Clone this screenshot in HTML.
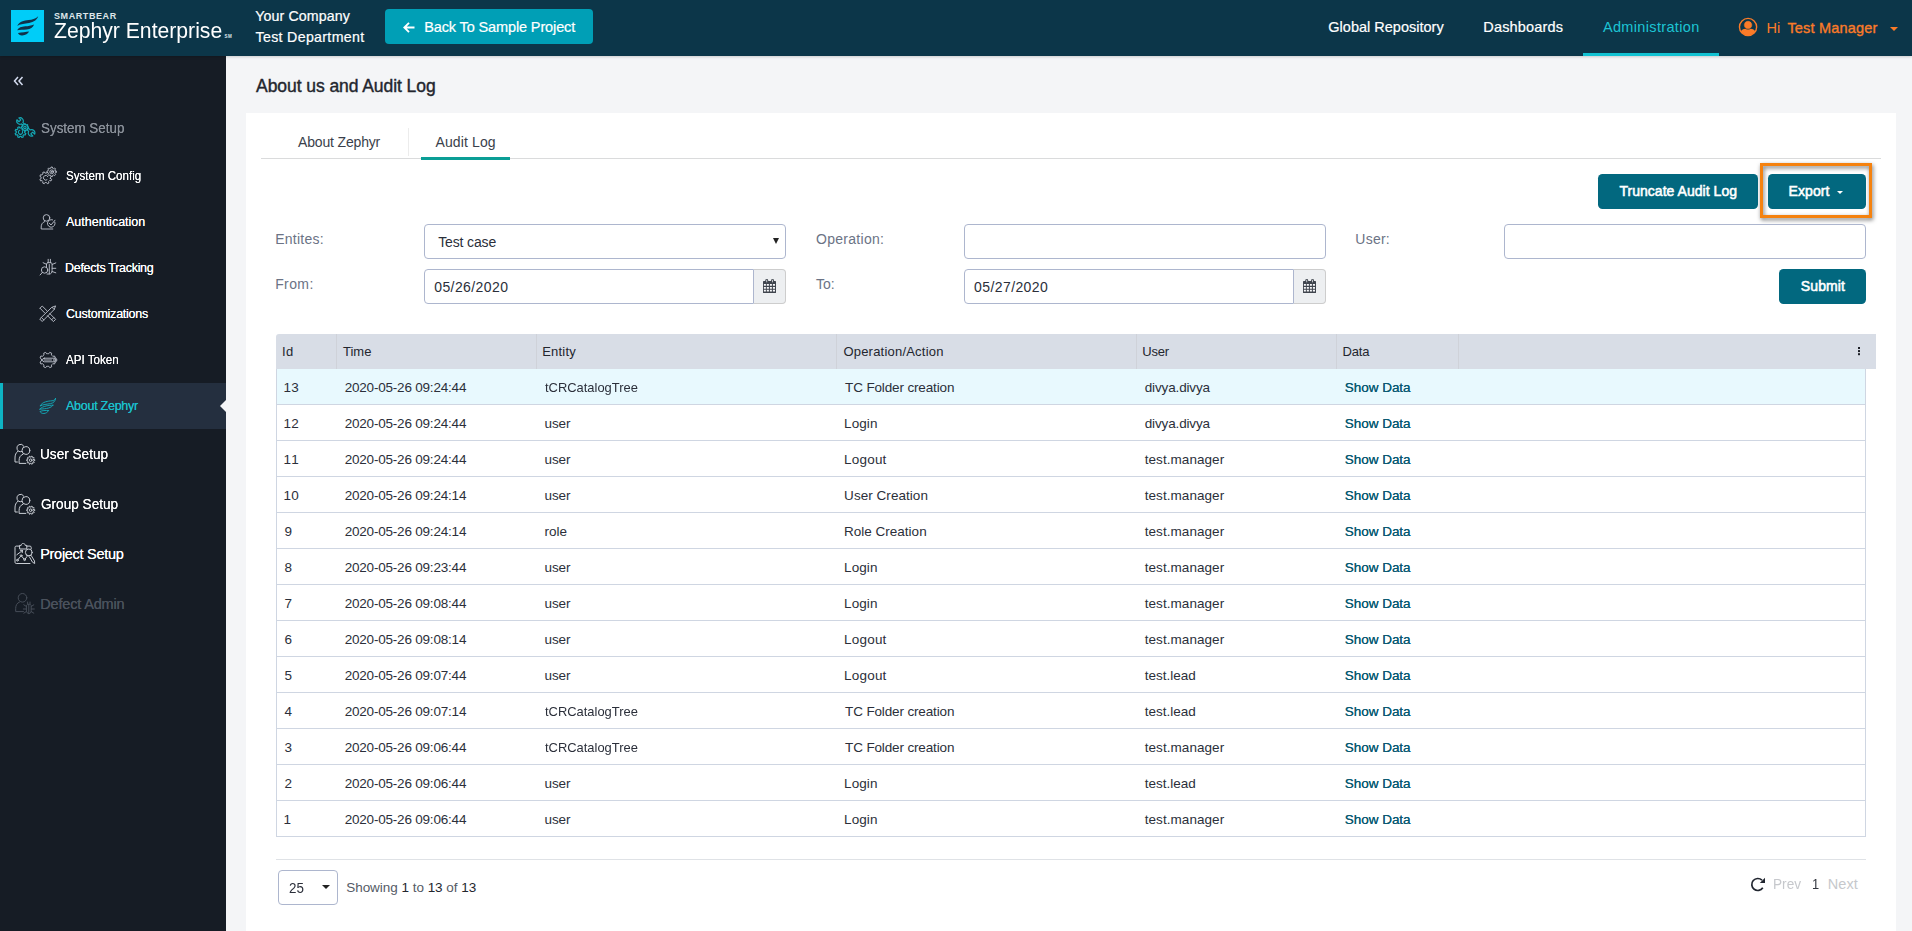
<!DOCTYPE html>
<html>
<head>
<meta charset="utf-8">
<title>Zephyr Enterprise - Audit Log</title>
<style>
*{box-sizing:border-box;margin:0;padding:0}
html,body{width:1912px;height:931px;overflow:hidden;background:#f4f5f7;font-family:"Liberation Sans",sans-serif;color:#2b2f3a}
.abs{position:absolute;white-space:nowrap}
#hdr{position:absolute;left:0;top:0;width:1912px;height:56px;background:#0c3649;box-shadow:0 1px 2.500px rgba(0,0,0,.17);z-index:5}
#side{position:absolute;left:0;top:56px;width:226px;height:875px;background:#161c25}
#panel{position:absolute;left:246px;top:113px;width:1650px;height:818px;background:#fff}
.t{position:absolute;white-space:nowrap;line-height:1}
.w{color:#fff}
.nav{font-size:15px;top:19px;color:#fff}
.sub{font-size:12.5px;font-weight:bold;color:#fff;left:66px;letter-spacing:-.2px}
.main{font-size:15px;font-weight:bold;color:#fff;left:41px;letter-spacing:-.2px}
.lbl{font-size:13.5px;color:#6e7687}
.inp{position:absolute;height:35px;border:1px solid #adb6ce;border-radius:4px;background:#fff}
.btn{position:absolute;height:35px;background:#02687f;border-radius:4.500px;color:#fff;font-weight:bold;font-size:14px;line-height:35px;text-align:center;white-space:nowrap}
.th{position:absolute;top:334px;height:35px;background:#d8dde6;border-right:1px solid #cdd2dc;font-size:12.5px;color:#2b2f3a;line-height:35px;padding-left:6px;white-space:nowrap}
.vl{position:absolute;top:334px;width:1px;height:35px;background:#cfd2d9}
.row{position:absolute;left:276px;width:1590px;height:36px;border-left:1px solid #cfd6e2;border-right:1px solid #cfd6e2;border-bottom:1px solid #cfd6e2;font-size:13.5px;line-height:35px;color:#2b2f3a}
.row span{position:absolute;top:0;white-space:nowrap}
.c1{left:6px}.c2{left:67px}.c3{left:267px}.c4{left:567px}.c5{left:867px}.c6{left:1067px;color:#0a5b73;text-shadow:0 0 0 #0a5b73}
</style>
</head>
<body>
<div id="hdr">
  <div class="abs" style="left:11px;top:10px;width:32.500px;height:32px;background:#00cdf8"></div>
  <svg class="abs" style="left:11px;top:10px" width="33" height="32" viewBox="0 0 33 32"><g fill="#10324a">
    <path d="M27.200 6.200 C24.500 9 21 9.600 17.700 9.900 C13 10.400 8 11.500 6.300 15.900 C9 14.200 12 14 16.400 13.300 C21 12.600 25.500 11 27.200 6.200 Z"/>
    <path d="M23.100 14.400 C20 15.800 17 16 14.300 16.300 C10.500 16.700 7.500 17.500 6.100 20.200 C9 19.800 12 20 15.600 19.600 C19.500 19 22 17.300 23.100 14.400 Z"/>
    <path d="M18.100 21.500 C15 22 11 22.300 7 23 C7.500 24.800 9.500 25.600 11.300 25.400 C14.500 25 17 23.800 18.100 21.500 Z"/></g></svg>
  <div class="t" style="font-size:9px;font-weight:bold;color:#dfe6ea;letter-spacing:0.588px;left:54.00px;top:12.00px;">SMARTBEAR</div>
  <div class="t" style="font-size:22px;color:#fff;transform:scaleX(0.9621);transform-origin:0 0;left:54.00px;top:20.00px;">Zephyr Enterprise</div>
  <div class="t" style="font-size:4.5px;font-weight:bold;color:#dfe6ea;letter-spacing:0.499px;left:224.50px;top:35.00px;">SM</div>
  <div class="t" style="font-size:14.2px;color:#fff;letter-spacing:0.106px;left:255.30px;top:9.00px;-webkit-text-stroke:.2px #fff;">Your Company</div>
  <div class="t" style="font-size:14.2px;color:#fff;letter-spacing:0.326px;left:255.50px;top:30.00px;-webkit-text-stroke:.2px #fff;">Test Department</div>
  <div class="abs" style="left:385px;top:9px;width:208px;height:35px;background:#009fb6;border-radius:4px"></div>
  <svg class="abs" style="left:403px;top:21.500px" width="12" height="11" viewBox="0 0 12 11" fill="none" stroke="#fff" stroke-width="1.900"><path d="M6 .8 L1.300 5.500 L6 10.200 M1.500 5.500 H11.500"/></svg>
  <div class="t" style="font-size:14.5px;color:#fff;letter-spacing:-0.124px;left:424.20px;top:20.00px;-webkit-text-stroke:.2px #fff;">Back To Sample Project</div>
  <div class="t" style="font-size:14.5px;color:#fff;letter-spacing:0.006px;left:1328.30px;top:20.00px;-webkit-text-stroke:.2px #fff;">Global Repository</div>
  <div class="t" style="font-size:14.5px;color:#fff;letter-spacing:0.163px;left:1483.30px;top:20.00px;-webkit-text-stroke:.2px #fff;">Dashboards</div>
  <div class="t" style="font-size:14.5px;color:#1cc4d4;letter-spacing:0.346px;left:1602.90px;top:20.00px;">Administration</div>
  <div class="abs" style="left:1583px;top:52.500px;width:136px;height:3.500px;background:#12c2d2"></div>
  <svg class="abs" style="left:1738.100px;top:17px" width="20" height="20" viewBox="0 0 20 20"><defs><clipPath id="uc"><circle cx="10.050" cy="10" r="8.400"/></clipPath></defs><circle cx="10.050" cy="10" r="8.600" fill="none" stroke="#fb7b28" stroke-width="1.400"/><g clip-path="url(#uc)" fill="#fb7b28"><path d="M2 20 V16 C3.200 13 5 11.700 7.700 11.700 H12.400 C15.100 11.700 16.900 13 18.100 16 V20 Z"/><circle cx="10.050" cy="7.950" r="4.300" stroke="#0c3649" stroke-width=".7"/></g></svg>
  <div class="t" style="font-size:14.5px;color:#fb7b28;letter-spacing:-0.171px;left:1766.60px;top:21.00px;">Hi</div>
  <div class="t" style="font-size:14.5px;color:#fb7b28;letter-spacing:0.180px;left:1787.40px;top:21.00px;-webkit-text-stroke:.35px #fb7b28;">Test Manager</div>
  <div class="abs" style="left:1889.500px;top:26.700px;width:0;height:0;border-left:4px solid transparent;border-right:4px solid transparent;border-top:4px solid #fb7b28"></div>
</div>
<div id="side">
  <!-- collapse chevrons -->
  <svg class="abs" style="left:13px;top:19.600px" width="11" height="10" viewBox="0 0 11 10" fill="none" stroke="#d4dcf0" stroke-width="1.5"><path d="M5 1 L1.5 5 L5 9 M9.5 1 L6 5 L9.5 9"/></svg>
  <!-- System Setup (top-level, teal icon, grey text) -->
  <svg class="abs" style="left:14px;top:61px" width="22" height="22" viewBox="0 0 22 22" fill="none" stroke="#14a8b5" stroke-width="1.15" stroke-linecap="round" stroke-linejoin="round"><path d="M7.48 6.95A3.3 3.3 0 0 1 2.95 2.74L4.93 4.76L6.79 2.95L4.81 0.92A3.3 3.3 0 0 1 8.91 5.55L16.12 12.95A3.3 3.3 0 0 1 20.65 17.16L18.67 15.14L16.81 16.95L18.79 18.98A3.3 3.3 0 0 1 14.69 14.35Z"/><path d="M10.65 15.82L11.83 16.57L11.23 18L9.88 17.7A4.2 4.2 0 0 1 9 18.58L9.3 19.93L7.87 20.53L7.12 19.35A4.2 4.2 0 0 1 5.88 19.35L5.13 20.53L3.7 19.93L4 18.58A4.2 4.2 0 0 1 3.12 17.7L1.77 18L1.17 16.57L2.35 15.82A4.2 4.2 0 0 1 2.35 14.58L1.17 13.83L1.77 12.4L3.12 12.7A4.2 4.2 0 0 1 4 11.82L3.7 10.47L5.13 9.87L5.88 11.05A4.2 4.2 0 0 1 7.12 11.05L7.87 9.87L9.3 10.47L9 11.82A4.2 4.2 0 0 1 9.88 12.7L11.23 12.4L11.83 13.83L10.65 14.58A4.2 4.2 0 0 1 10.65 15.82Z" fill="#161c25"/><path d="M8.47 14.48A2.1 2.1 0 1 1 5.78 13.23"/><path d="M13.52 9.75L14.46 9.89L14.46 10.91L13.52 11.05A2.7 2.7 0 0 1 13.21 11.79L13.78 12.56L13.06 13.28L12.29 12.71A2.7 2.7 0 0 1 11.55 13.02L11.41 13.96L10.39 13.96L10.25 13.02A2.7 2.7 0 0 1 9.51 12.71L8.74 13.28L8.02 12.56L8.59 11.79A2.7 2.7 0 0 1 8.28 11.05L7.34 10.91L7.34 9.89L8.28 9.75A2.7 2.7 0 0 1 8.59 9.01L8.02 8.24L8.74 7.52L9.51 8.09A2.7 2.7 0 0 1 10.25 7.78L10.39 6.84L11.41 6.84L11.55 7.78A2.7 2.7 0 0 1 12.29 8.09L13.06 7.52L13.78 8.24L13.21 9.01A2.7 2.7 0 0 1 13.52 9.75Z" fill="#161c25"/><circle cx="10.9" cy="10.4" r="1.2"/></svg>
  <div class="t" style="font-size:14.5px;color:#8a9099;transform:scaleX(0.9235);transform-origin:0 0;left:41.00px;top:65.00px;text-shadow:0 0 .6px #8a9099;">System Setup</div>

  <!-- System Config -->
  <svg class="abs" style="left:39px;top:110px" width="19" height="19" viewBox="0 0 19 19" fill="none" stroke="#b9bec8" stroke-width="0.95" stroke-linecap="round" stroke-linejoin="round"><path d="M11.45 12.5L12.71 13.32L12.05 14.91L10.58 14.59A4.7 4.7 0 0 1 9.59 15.58L9.91 17.05L8.32 17.71L7.5 16.45A4.7 4.7 0 0 1 6.1 16.45L5.28 17.71L3.69 17.05L4.01 15.58A4.7 4.7 0 0 1 3.02 14.59L1.55 14.91L0.89 13.32L2.15 12.5A4.7 4.7 0 0 1 2.15 11.1L0.89 10.28L1.55 8.69L3.02 9.01A4.7 4.7 0 0 1 4.01 8.02L3.69 6.55L5.28 5.89L6.1 7.15A4.7 4.7 0 0 1 7.5 7.15L8.32 5.89L9.91 6.55L9.59 8.02A4.7 4.7 0 0 1 10.58 9.01L12.05 8.69L12.71 10.28L11.45 11.1A4.7 4.7 0 0 1 11.45 12.5Z"/><path d="M8 13.88A2.4 2.4 0 1 1 8.88 10.6"/><path d="M16.29 4.91L17.45 5.12L17.45 6.48L16.29 6.69A3.7 3.7 0 0 1 15.87 7.71L16.54 8.68L15.58 9.64L14.61 8.97A3.7 3.7 0 0 1 13.59 9.39L13.38 10.55L12.02 10.55L11.81 9.39A3.7 3.7 0 0 1 10.79 8.97L9.82 9.64L8.86 8.68L9.53 7.71A3.7 3.7 0 0 1 9.11 6.69L7.95 6.48L7.95 5.12L9.11 4.91A3.7 3.7 0 0 1 9.53 3.89L8.86 2.92L9.82 1.96L10.79 2.63A3.7 3.7 0 0 1 11.81 2.21L12.02 1.05L13.38 1.05L13.59 2.21A3.7 3.7 0 0 1 14.61 2.63L15.58 1.96L16.54 2.92L15.87 3.89A3.7 3.7 0 0 1 16.29 4.91Z" fill="#161c25"/><circle cx="12.700" cy="5.800" r="1.900"/><circle cx="12.700" cy="5.800" r=".5" fill="#b9bec8"/></svg>
  <div class="t" style="font-size:12.5px;color:#ffffff;transform:scaleX(0.9246);transform-origin:0 0;left:66.00px;top:114.00px;text-shadow:0 0 .6px #ffffff;">System Config</div>

  <!-- Authentication -->
  <svg class="abs" style="left:40px;top:158px" width="17" height="17" viewBox="0 0 17 17" fill="none" stroke="#b9bec8" stroke-width="0.95" stroke-linecap="round" stroke-linejoin="round"><circle cx="6.500" cy="3.900" r="3.300"/><path d="M4.600 7.600 C2.200 8.600 1.200 10.500 1.200 13 V15 H12.800"/><path d="M14.87 8.1A3.8 3.8 0 1 1 12.6 5.83"/><path d="M9.400 9.300 L11 11 L15 6.200"/></svg>
  <div class="t" style="font-size:12.5px;color:#ffffff;letter-spacing:0.002px;left:66.00px;top:160.00px;text-shadow:0 0 .6px #ffffff;">Authentication</div>

  <!-- Defects Tracking -->
  <svg class="abs" style="left:39px;top:202px" width="18" height="18" viewBox="0 0 18 18" fill="none" stroke="#b9bec8" stroke-width="0.95" stroke-linecap="round" stroke-linejoin="round"><path d="M8.600 4.700 H12 M9.200 4.700 V1.300 M11.400 4.700 V1.300 M8.600 4.700 C7.800 5 7.500 5.800 7.500 6.500 M12 4.700 C12.800 5 13.100 5.800 13.100 6.500 V12.500 C13.100 14.800 12 16 10.300 16 H8"/><path d="M10.300 6.500 V16 M7.500 6.500 V8.600 M13.100 6.500 L16.800 4.900 M13.100 10.300 H16.800 M13.100 13.500 L16.800 14.800 M7.500 6.300 L4.100 4.700"/><circle cx="5.600" cy="12" r="3.200"/><path d="M3.400 14.400 L1.100 17"/></svg>
  <div class="t" style="font-size:12.5px;color:#ffffff;letter-spacing:-0.291px;left:65.00px;top:206.00px;text-shadow:0 0 .6px #ffffff;">Defects Tracking</div>

  <!-- Customizations -->
  <svg class="abs" style="left:39px;top:249px" width="18" height="18" viewBox="0 0 18 18" fill="none" stroke="#b9bec8" stroke-width="0.95" stroke-linecap="round" stroke-linejoin="round"><path d="M1 14.300 L3.200 16.500 L15.200 4.500 L16.600 .9 L13 2.300 Z M13 2.300 L15.200 4.500 M2.600 12.700 L4.800 14.900"/><path d="M1 3.200 L3.200 1 L8 5.800 M10.700 8.500 L16.600 14.400 L14.400 16.600 L8.500 10.700 M5.800 8 L1 3.200 M12.600 14.800 L14.800 12.600"/></svg>
  <div class="t" style="font-size:12.5px;color:#ffffff;letter-spacing:-0.246px;left:66.00px;top:252.00px;text-shadow:0 0 .6px #ffffff;">Customizations</div>

  <!-- API Token -->
  <svg class="abs" style="left:39px;top:295px" width="19" height="18" viewBox="0 0 19 18" fill="none" stroke="#b9bec8" stroke-width="0.95" stroke-linecap="round" stroke-linejoin="round"><path d="M14.92 9.99L16.34 11.02L15.53 12.97L13.8 12.7A6.3 6.3 0 0 1 12.4 14.1L12.67 15.83L10.72 16.64L9.69 15.22A6.3 6.3 0 0 1 7.71 15.22L6.68 16.64L4.73 15.83L5 14.1A6.3 6.3 0 0 1 3.6 12.7L1.87 12.97L1.06 11.02L2.48 9.99A6.3 6.3 0 0 1 2.48 8.01L1.06 6.98L1.87 5.03L3.6 5.3A6.3 6.3 0 0 1 5 3.9L4.73 2.17L6.68 1.36L7.71 2.78A6.3 6.3 0 0 1 9.69 2.78L10.72 1.36L12.67 2.17L12.4 3.9A6.3 6.3 0 0 1 13.8 5.3L15.53 5.03L16.34 6.98L14.92 8.01A6.3 6.3 0 0 1 14.92 9.99Z"/><rect x="3.500" y="7.200" width="14.400" height="3.600" rx="1.800" fill="#161c25"/><circle cx="15.600" cy="9" r="1"/><path d="M5.300 9 H12.500"/></svg>
  <div class="t" style="font-size:12.5px;color:#ffffff;transform:scaleX(0.9294);transform-origin:0 0;left:66.00px;top:298.00px;text-shadow:0 0 .6px #ffffff;">API Token</div>

  <!-- About Zephyr (active) -->
  <div class="abs" style="left:0;top:327px;width:226px;height:46px;background:#242f3f;border-left:3px solid #0eb4c4"></div>
  <svg class="abs" style="left:39px;top:342px" width="18" height="17" viewBox="0 0 18 17" fill="none" stroke="#14a8b5" stroke-width="0.95" stroke-linecap="round" stroke-linejoin="round"><path d="M16.600 .3 C15.800 2 14.800 2.600 13 2.800 C9 3.100 3.500 3.600 1 8.100 C4 6.300 8 6.300 11.500 5.600 C14.500 5 16.300 3.400 16.600 .3 Z"/><path d="M13.900 7.200 C10 7.300 4 7.800 .5 11.300 C4 10.800 7 10.800 9.500 10 C11.800 9.300 13.200 8.500 13.900 7.200 Z"/><path d="M9.400 12.600 C6.500 12.300 3 12.500 1 13.500 C1.800 15 3.300 15.600 4.900 15.500 C7 15.300 8.700 14.300 9.400 12.600 Z"/></svg>
  <div class="t" style="font-size:12.5px;color:#1bbfcb;letter-spacing:-0.262px;left:66.00px;top:344.00px;text-shadow:0 0 .6px #1bbfcb;">About Zephyr</div>
  <div class="abs" style="left:220px;top:343.500px;width:0;height:0;border-top:6px solid transparent;border-bottom:6px solid transparent;border-right:6px solid #f4f5f7"></div>

  <!-- User Setup -->
  <svg class="abs" style="left:14px;top:387px" width="22" height="22" viewBox="0 0 22 22" fill="none" stroke="#c9cdd4" stroke-width="1" stroke-linecap="round" stroke-linejoin="round"><path d="M7.56 8.57A3.7 3.7 0 1 1 9.8 3.15"/><path d="M3.900 8.200 C1.800 9.800 1 12 1 15 V19 H3.400"/><circle cx="11.900" cy="7.500" r="3.900"/><path d="M8.900 11.200 C6.200 12.400 5.100 14.500 5.100 17.500 V20.400 H11.800"/><path d="M19.75 16.62L20.78 16.76L20.78 17.64L19.75 17.78A3.1 3.1 0 0 1 19.5 18.52L20.25 19.24L19.74 19.95L18.82 19.46A3.1 3.1 0 0 1 18.19 19.92L18.38 20.94L17.54 21.21L17.09 20.28A3.1 3.1 0 0 1 16.31 20.28L15.86 21.21L15.02 20.94L15.21 19.92A3.1 3.1 0 0 1 14.58 19.46L13.66 19.95L13.15 19.24L13.9 18.52A3.1 3.1 0 0 1 13.65 17.78L12.62 17.64L12.62 16.76L13.65 16.62A3.1 3.1 0 0 1 13.9 15.88L13.15 15.16L13.66 14.45L14.58 14.94A3.1 3.1 0 0 1 15.21 14.48L15.02 13.46L15.86 13.19L16.31 14.12A3.1 3.1 0 0 1 17.09 14.12L17.54 13.19L18.38 13.46L18.19 14.48A3.1 3.1 0 0 1 18.82 14.94L19.74 14.45L20.25 15.16L19.5 15.88A3.1 3.1 0 0 1 19.75 16.62Z"/><circle cx="16.700" cy="17.200" r="1.300"/></svg>
  <div class="t" style="font-size:14.5px;color:#ffffff;transform:scaleX(0.9388);transform-origin:0 0;left:40.26px;top:391.00px;text-shadow:0 0 .6px #ffffff;">User Setup</div>

  <!-- Group Setup -->
  <svg class="abs" style="left:14px;top:437px" width="22" height="22" viewBox="0 0 22 22" fill="none" stroke="#c9cdd4" stroke-width="1" stroke-linecap="round" stroke-linejoin="round"><path d="M7.56 8.57A3.7 3.7 0 1 1 9.8 3.15"/><path d="M3.900 8.200 C1.800 9.800 1 12 1 15 V19 H3.400"/><circle cx="11.900" cy="7.500" r="3.900"/><path d="M8.900 11.200 C6.200 12.400 5.100 14.500 5.100 17.500 V20.400 H11.800"/><path d="M19.75 16.62L20.78 16.76L20.78 17.64L19.75 17.78A3.1 3.1 0 0 1 19.5 18.52L20.25 19.24L19.74 19.95L18.82 19.46A3.1 3.1 0 0 1 18.19 19.92L18.38 20.94L17.54 21.21L17.09 20.28A3.1 3.1 0 0 1 16.31 20.28L15.86 21.21L15.02 20.94L15.21 19.92A3.1 3.1 0 0 1 14.58 19.46L13.66 19.95L13.15 19.24L13.9 18.52A3.1 3.1 0 0 1 13.65 17.78L12.62 17.64L12.62 16.76L13.65 16.62A3.1 3.1 0 0 1 13.9 15.88L13.15 15.16L13.66 14.45L14.58 14.94A3.1 3.1 0 0 1 15.21 14.48L15.02 13.46L15.86 13.19L16.31 14.12A3.1 3.1 0 0 1 17.09 14.12L17.54 13.19L18.38 13.46L18.19 14.48A3.1 3.1 0 0 1 18.82 14.94L19.74 14.45L20.25 15.16L19.5 15.88A3.1 3.1 0 0 1 19.75 16.62Z"/><circle cx="16.700" cy="17.200" r="1.300"/></svg>
  <div class="t" style="font-size:14.5px;color:#ffffff;transform:scaleX(0.9385);transform-origin:0 0;left:41.20px;top:441.00px;text-shadow:0 0 .6px #ffffff;">Group Setup</div>

  <!-- Project Setup -->
  <svg class="abs" style="left:14px;top:487px" width="22" height="22" viewBox="0 0 22 22" fill="none" stroke="#c9cdd4" stroke-width="1" stroke-linecap="round" stroke-linejoin="round"><path d="M5.600 3.100 H2.200 C1.500 3.100 1 3.600 1 4.300 V19.300 C1 20 1.500 20.500 2.200 20.500 H16 M12.800 3.100 H16 C16.700 3.100 17.200 3.600 17.200 4.300 V5.800"/><path d="M5.600 5.600 V2.400 H7.200 C7.500 .9 8.200 .3 9.200 .3 S10.900 .9 11.200 2.400 H12.800 V5.600 Z"/><path d="M2.800 11.800 L8.500 7.500 M6.300 7.300 L8.600 7.400 L8.200 9.700 M4 16.500 L6.500 13.500 M7.800 13.400 L10 16 M11.200 16 L13 13.500"/><circle cx="3.400" cy="17.200" r=".9"/><circle cx="7.100" cy="12.700" r=".9"/><circle cx="10.600" cy="16.700" r=".9"/><circle cx="14.800" cy="9.400" r="3.400" fill="#161c25"/><path d="M12.300 12 C13.500 13 15.500 13.300 17 12.200 L20.500 18 L20.700 20.500 L18.500 19.200 L15.500 14"/></svg>
  <div class="t" style="font-size:14.5px;color:#ffffff;letter-spacing:-0.290px;left:40.20px;top:491.00px;text-shadow:0 0 .6px #ffffff;">Project Setup</div>

  <!-- Defect Admin (disabled) -->
  <svg class="abs" style="left:14px;top:537px" width="22" height="23" viewBox="0 0 22 23" fill="none" stroke="#464d58" stroke-width="1" stroke-linecap="round" stroke-linejoin="round"><circle cx="8.500" cy="4.800" r="4.300"/><path d="M5.500 9 C2.800 10 1.700 12.500 1.700 15.500 V18.600 H9.500"/><path d="M12.400 12.600 C12.400 10.800 17.200 10.800 17.200 12.600 V17.500 C17.200 21.800 12.400 21.800 12.400 17.500 Z M14.800 11.200 V20.700 M13.600 11 V9 M16 11 V9"/><path d="M12.400 13.500 L9.800 11.800 M12.400 16 H9.300 M12.400 18.500 L9.800 20.200 M17.200 13.500 L19.800 11.800 M17.200 16 H20.300 M17.200 18.500 L19.800 20.200"/></svg>
  <div class="t" style="font-size:14.5px;color:#4b525d;letter-spacing:-0.161px;left:40.20px;top:541.00px;text-shadow:0 0 .6px #4b525d;">Defect Admin</div>
</div>
<div class="t" style="font-size:17.5px;color:#23262e;letter-spacing:-0.067px;left:256.10px;top:78.00px;-webkit-text-stroke:.4px #23262e;">About us and Audit Log</div>
<div id="panel"></div>
<!-- tabs -->
<div class="abs" style="left:261px;top:158px;width:1620px;height:1px;background:#dadbdc"></div>
<div class="abs" style="left:408px;top:128px;width:1px;height:28px;background:#ececec"></div>
<div class="t" style="font-size:14px;color:#3a3f4b;letter-spacing:-0.162px;left:298.00px;top:135.00px;">About Zephyr</div>
<div class="t" style="font-size:14px;color:#3a3f4b;letter-spacing:0.116px;left:435.50px;top:135.00px;">Audit Log</div>
<div class="abs" style="left:421px;top:157px;width:89px;height:3px;background:#0a9e96"></div>
<!-- action buttons -->
<div class="btn" style="left:1598px;top:174px;width:160px"></div>
<div class="t" style="font-size:14px;color:#fff;letter-spacing:0.036px;left:1619.40px;top:184.00px;-webkit-text-stroke:.55px #fff;">Truncate Audit Log</div>
<div class="abs" style="left:1760px;top:163px;width:112px;height:55px;border:3px solid #f5820f;filter:drop-shadow(1.500px 2px 2px rgba(0,0,0,.55))"></div>
<div class="btn" style="left:1768px;top:174px;width:98px"></div>
<div class="t" style="font-size:14px;color:#fff;letter-spacing:0.106px;left:1788.50px;top:184.00px;-webkit-text-stroke:.55px #fff;">Export</div>
<div class="abs" style="left:1837.200px;top:190.600px;width:0;height:0;border-left:3.700px solid transparent;border-right:3.700px solid transparent;border-top:3.700px solid #fff"></div>
<!-- form row 1 -->
<div class="t" style="font-size:14px;color:#6b7385;letter-spacing:0.243px;left:275.20px;top:232.00px;">Entites:</div>
<div class="inp" style="left:424px;top:224px;width:362px"></div>
<div class="t" style="font-size:14px;color:#2b2f3a;letter-spacing:-0.131px;left:438.20px;top:235.00px;">Test case</div>
<div class="abs" style="left:772.500px;top:237.500px;width:0;height:0;border-left:3.200px solid transparent;border-right:3.200px solid transparent;border-top:6px solid #222"></div>
<div class="t" style="font-size:14px;color:#6b7385;letter-spacing:0.269px;left:816.10px;top:232.00px;">Operation:</div>
<div class="inp" style="left:964px;top:224px;width:362px"></div>
<div class="t" style="font-size:14px;color:#6b7385;letter-spacing:0.235px;left:1355.30px;top:232.00px;">User:</div>
<div class="inp" style="left:1504px;top:224px;width:362px"></div>
<!-- form row 2 -->
<div class="t" style="font-size:14px;color:#6b7385;letter-spacing:0.384px;left:275.20px;top:277.00px;">From:</div>
<div class="inp" style="left:424px;top:269px;width:330px;border-radius:4px 0 0 4px"></div>
<div class="abs" style="left:754px;top:269px;width:32px;height:35px;background:#edeff1;border:1px solid #cdcdcd;border-left:0;border-radius:0 4px 4px 0"></div>
<svg class="abs" style="left:763.100px;top:279.200px" width="13" height="14" viewBox="0 0 13 14"><rect x="0" y="2" width="13" height="12" rx=".6" fill="#40454e"/><path fill="#f7f8f9" d="M.9 5h2v1.800h-2zM3.800 5h2.100v1.800h-2.100zM6.900 5h2v1.800h-2zM9.900 5h2.100v1.800h-2.100zM.9 7.900h2v1.800h-2zM3.800 7.900h2.100v1.800h-2.100zM6.900 7.900h2v1.800h-2zM9.900 7.900h2.100v1.800h-2.100zM.9 10.800h2v1.800h-2zM3.800 10.800h2.100v1.800h-2.100zM6.900 10.800h2v1.800h-2zM9.900 10.800h2.100v1.800h-2.100z"/><rect x="2.300" y="0" width="2.900" height="4" rx="1.400" fill="#40454e"/><rect x="8.100" y="0" width="2.900" height="4" rx="1.400" fill="#40454e"/><rect x="3.350" y=".8" width=".8" height="2.500" fill="#e4e7ea"/><rect x="9.150" y=".8" width=".8" height="2.500" fill="#e4e7ea"/></svg>
<div class="t" style="font-size:14px;color:#2b2f3a;letter-spacing:0.413px;left:434.20px;top:280.00px;">05/26/2020</div>
<div class="t" style="font-size:14px;color:#6b7385;letter-spacing:-0.043px;left:816.10px;top:277.00px;">To:</div>
<div class="inp" style="left:964px;top:269px;width:330px;border-radius:4px 0 0 4px"></div>
<div class="abs" style="left:1294px;top:269px;width:32px;height:35px;background:#edeff1;border:1px solid #cdcdcd;border-left:0;border-radius:0 4px 4px 0"></div>
<svg class="abs" style="left:1303.100px;top:279.200px" width="13" height="14" viewBox="0 0 13 14"><rect x="0" y="2" width="13" height="12" rx=".6" fill="#40454e"/><path fill="#f7f8f9" d="M.9 5h2v1.800h-2zM3.800 5h2.100v1.800h-2.100zM6.900 5h2v1.800h-2zM9.900 5h2.100v1.800h-2.100zM.9 7.900h2v1.800h-2zM3.800 7.900h2.100v1.800h-2.100zM6.900 7.900h2v1.800h-2zM9.900 7.900h2.100v1.800h-2.100zM.9 10.800h2v1.800h-2zM3.800 10.800h2.100v1.800h-2.100zM6.900 10.800h2v1.800h-2zM9.900 10.800h2.100v1.800h-2.100z"/><rect x="2.300" y="0" width="2.900" height="4" rx="1.400" fill="#40454e"/><rect x="8.100" y="0" width="2.900" height="4" rx="1.400" fill="#40454e"/><rect x="3.350" y=".8" width=".8" height="2.500" fill="#e4e7ea"/><rect x="9.150" y=".8" width=".8" height="2.500" fill="#e4e7ea"/></svg>
<div class="t" style="font-size:14px;color:#2b2f3a;letter-spacing:0.402px;left:974.10px;top:280.00px;">05/27/2020</div>
<div class="btn" style="left:1779px;top:269px;width:87px"></div>
<div class="t" style="font-size:14px;color:#fff;letter-spacing:0.103px;left:1800.80px;top:279.00px;-webkit-text-stroke:.55px #fff;">Submit</div>
<!-- table header -->
<div class="abs" style="left:276px;top:334px;width:1600px;height:35px;background:#d8dde6;border-radius:3px 0 0 0"></div>
<div class="vl" style="left:336px"></div><div class="vl" style="left:536px"></div><div class="vl" style="left:836px"></div><div class="vl" style="left:1136px"></div><div class="vl" style="left:1336px"></div><div class="vl" style="left:1458px"></div>
<div class="t" style="font-size:13px;color:#23262e;letter-spacing:0.188px;left:282.10px;top:345.00px;">Id</div>
<div class="t" style="font-size:13px;color:#23262e;letter-spacing:0.041px;left:342.90px;top:345.00px;">Time</div>
<div class="t" style="font-size:13px;color:#23262e;letter-spacing:0.217px;left:542.20px;top:345.00px;">Entity</div>
<div class="t" style="font-size:13px;color:#23262e;letter-spacing:0.213px;left:843.40px;top:345.00px;">Operation/Action</div>
<div class="t" style="font-size:13px;color:#23262e;letter-spacing:-0.206px;left:1142.30px;top:345.00px;">User</div>
<div class="t" style="font-size:13px;color:#23262e;letter-spacing:-0.143px;left:1342.50px;top:345.00px;">Data</div>
<div class="abs" style="left:1857.700px;top:347.200px;width:2.500px;height:2.200px;background:#1d2027;box-shadow:0 3.100px 0 #1d2027,0 6.200px 0 #1d2027"></div>
<!-- rows -->
<div class="row" style="top:369px;background:#e8f9fe;"></div>
<div class="t" style="font-size:13.5px;color:#2b2f3a;letter-spacing:0.092px;left:283.60px;top:381.00px;">13</div>
<div class="t" style="font-size:13.5px;color:#2b2f3a;letter-spacing:-0.203px;left:344.70px;top:381.00px;">2020-05-26 09:24:44</div>
<div class="t" style="font-size:13.5px;color:#2b2f3a;transform:scaleX(0.9572);transform-origin:0 0;left:544.50px;top:381.00px;">tCRCatalogTree</div>
<div class="t" style="font-size:13.5px;color:#2b2f3a;letter-spacing:-0.146px;left:845.10px;top:381.00px;">TC Folder creation</div>
<div class="t" style="font-size:13.5px;color:#2b2f3a;letter-spacing:-0.137px;left:1144.70px;top:381.00px;">divya.divya</div>
<div class="t" style="font-size:13.5px;color:#0b5a72;letter-spacing:-0.029px;left:1344.80px;top:381.00px;text-shadow:0 0 .5px #0b5a72;">Show Data</div>
<div class="row" style="top:405px;"></div>
<div class="t" style="font-size:13.5px;color:#2b2f3a;letter-spacing:0.092px;left:283.60px;top:417.00px;">12</div>
<div class="t" style="font-size:13.5px;color:#2b2f3a;letter-spacing:-0.203px;left:344.70px;top:417.00px;">2020-05-26 09:24:44</div>
<div class="t" style="font-size:13.5px;color:#2b2f3a;letter-spacing:-0.089px;left:544.50px;top:417.00px;">user</div>
<div class="t" style="font-size:13.5px;color:#2b2f3a;letter-spacing:0.069px;left:844.10px;top:417.00px;">Login</div>
<div class="t" style="font-size:13.5px;color:#2b2f3a;letter-spacing:-0.137px;left:1144.70px;top:417.00px;">divya.divya</div>
<div class="t" style="font-size:13.5px;color:#0b5a72;letter-spacing:-0.029px;left:1344.80px;top:417.00px;text-shadow:0 0 .5px #0b5a72;">Show Data</div>
<div class="row" style="top:441px;"></div>
<div class="t" style="font-size:13.5px;color:#2b2f3a;letter-spacing:1.094px;left:283.60px;top:453.00px;">11</div>
<div class="t" style="font-size:13.5px;color:#2b2f3a;letter-spacing:-0.203px;left:344.70px;top:453.00px;">2020-05-26 09:24:44</div>
<div class="t" style="font-size:13.5px;color:#2b2f3a;letter-spacing:-0.089px;left:544.50px;top:453.00px;">user</div>
<div class="t" style="font-size:13.5px;color:#2b2f3a;letter-spacing:0.192px;left:844.10px;top:453.00px;">Logout</div>
<div class="t" style="font-size:13.5px;color:#2b2f3a;letter-spacing:0.064px;left:1144.70px;top:453.00px;">test.manager</div>
<div class="t" style="font-size:13.5px;color:#0b5a72;letter-spacing:-0.029px;left:1344.80px;top:453.00px;text-shadow:0 0 .5px #0b5a72;">Show Data</div>
<div class="row" style="top:477px;"></div>
<div class="t" style="font-size:13.5px;color:#2b2f3a;letter-spacing:0.092px;left:283.60px;top:489.00px;">10</div>
<div class="t" style="font-size:13.5px;color:#2b2f3a;letter-spacing:-0.203px;left:344.70px;top:489.00px;">2020-05-26 09:24:14</div>
<div class="t" style="font-size:13.5px;color:#2b2f3a;letter-spacing:-0.089px;left:544.50px;top:489.00px;">user</div>
<div class="t" style="font-size:13.5px;color:#2b2f3a;letter-spacing:0.044px;left:844.10px;top:489.00px;">User Creation</div>
<div class="t" style="font-size:13.5px;color:#2b2f3a;letter-spacing:0.064px;left:1144.70px;top:489.00px;">test.manager</div>
<div class="t" style="font-size:13.5px;color:#0b5a72;letter-spacing:-0.029px;left:1344.80px;top:489.00px;text-shadow:0 0 .5px #0b5a72;">Show Data</div>
<div class="row" style="top:513px;"></div>
<div class="t" style="font-size:13.5px;color:#2b2f3a;letter-spacing:-0.050px;left:284.60px;top:525.00px;">9</div>
<div class="t" style="font-size:13.5px;color:#2b2f3a;letter-spacing:-0.203px;left:344.70px;top:525.00px;">2020-05-26 09:24:14</div>
<div class="t" style="font-size:13.5px;color:#2b2f3a;left:544.50px;top:525.00px;">role</div>
<div class="t" style="font-size:13.5px;color:#2b2f3a;left:844.10px;top:525.00px;">Role Creation</div>
<div class="t" style="font-size:13.5px;color:#2b2f3a;letter-spacing:0.064px;left:1144.70px;top:525.00px;">test.manager</div>
<div class="t" style="font-size:13.5px;color:#0b5a72;letter-spacing:-0.029px;left:1344.80px;top:525.00px;text-shadow:0 0 .5px #0b5a72;">Show Data</div>
<div class="row" style="top:549px;"></div>
<div class="t" style="font-size:13.5px;color:#2b2f3a;letter-spacing:-0.050px;left:284.60px;top:561.00px;">8</div>
<div class="t" style="font-size:13.5px;color:#2b2f3a;letter-spacing:-0.203px;left:344.70px;top:561.00px;">2020-05-26 09:23:44</div>
<div class="t" style="font-size:13.5px;color:#2b2f3a;letter-spacing:-0.089px;left:544.50px;top:561.00px;">user</div>
<div class="t" style="font-size:13.5px;color:#2b2f3a;letter-spacing:0.069px;left:844.10px;top:561.00px;">Login</div>
<div class="t" style="font-size:13.5px;color:#2b2f3a;letter-spacing:0.064px;left:1144.70px;top:561.00px;">test.manager</div>
<div class="t" style="font-size:13.5px;color:#0b5a72;letter-spacing:-0.029px;left:1344.80px;top:561.00px;text-shadow:0 0 .5px #0b5a72;">Show Data</div>
<div class="row" style="top:585px;"></div>
<div class="t" style="font-size:13.5px;color:#2b2f3a;letter-spacing:-0.050px;left:284.60px;top:597.00px;">7</div>
<div class="t" style="font-size:13.5px;color:#2b2f3a;letter-spacing:-0.203px;left:344.70px;top:597.00px;">2020-05-26 09:08:44</div>
<div class="t" style="font-size:13.5px;color:#2b2f3a;letter-spacing:-0.089px;left:544.50px;top:597.00px;">user</div>
<div class="t" style="font-size:13.5px;color:#2b2f3a;letter-spacing:0.069px;left:844.10px;top:597.00px;">Login</div>
<div class="t" style="font-size:13.5px;color:#2b2f3a;letter-spacing:0.064px;left:1144.70px;top:597.00px;">test.manager</div>
<div class="t" style="font-size:13.5px;color:#0b5a72;letter-spacing:-0.029px;left:1344.80px;top:597.00px;text-shadow:0 0 .5px #0b5a72;">Show Data</div>
<div class="row" style="top:621px;"></div>
<div class="t" style="font-size:13.5px;color:#2b2f3a;letter-spacing:-0.050px;left:284.60px;top:633.00px;">6</div>
<div class="t" style="font-size:13.5px;color:#2b2f3a;letter-spacing:-0.203px;left:344.70px;top:633.00px;">2020-05-26 09:08:14</div>
<div class="t" style="font-size:13.5px;color:#2b2f3a;letter-spacing:-0.089px;left:544.50px;top:633.00px;">user</div>
<div class="t" style="font-size:13.5px;color:#2b2f3a;letter-spacing:0.192px;left:844.10px;top:633.00px;">Logout</div>
<div class="t" style="font-size:13.5px;color:#2b2f3a;letter-spacing:0.064px;left:1144.70px;top:633.00px;">test.manager</div>
<div class="t" style="font-size:13.5px;color:#0b5a72;letter-spacing:-0.029px;left:1344.80px;top:633.00px;text-shadow:0 0 .5px #0b5a72;">Show Data</div>
<div class="row" style="top:657px;"></div>
<div class="t" style="font-size:13.5px;color:#2b2f3a;letter-spacing:-0.050px;left:284.60px;top:669.00px;">5</div>
<div class="t" style="font-size:13.5px;color:#2b2f3a;letter-spacing:-0.203px;left:344.70px;top:669.00px;">2020-05-26 09:07:44</div>
<div class="t" style="font-size:13.5px;color:#2b2f3a;letter-spacing:-0.089px;left:544.50px;top:669.00px;">user</div>
<div class="t" style="font-size:13.5px;color:#2b2f3a;letter-spacing:0.192px;left:844.10px;top:669.00px;">Logout</div>
<div class="t" style="font-size:13.5px;color:#2b2f3a;left:1144.70px;top:669.00px;">test.lead</div>
<div class="t" style="font-size:13.5px;color:#0b5a72;letter-spacing:-0.029px;left:1344.80px;top:669.00px;text-shadow:0 0 .5px #0b5a72;">Show Data</div>
<div class="row" style="top:693px;"></div>
<div class="t" style="font-size:13.5px;color:#2b2f3a;letter-spacing:-0.050px;left:284.60px;top:705.00px;">4</div>
<div class="t" style="font-size:13.5px;color:#2b2f3a;letter-spacing:-0.203px;left:344.70px;top:705.00px;">2020-05-26 09:07:14</div>
<div class="t" style="font-size:13.5px;color:#2b2f3a;transform:scaleX(0.9572);transform-origin:0 0;left:544.50px;top:705.00px;">tCRCatalogTree</div>
<div class="t" style="font-size:13.5px;color:#2b2f3a;letter-spacing:-0.146px;left:845.10px;top:705.00px;">TC Folder creation</div>
<div class="t" style="font-size:13.5px;color:#2b2f3a;left:1144.70px;top:705.00px;">test.lead</div>
<div class="t" style="font-size:13.5px;color:#0b5a72;letter-spacing:-0.029px;left:1344.80px;top:705.00px;text-shadow:0 0 .5px #0b5a72;">Show Data</div>
<div class="row" style="top:729px;"></div>
<div class="t" style="font-size:13.5px;color:#2b2f3a;letter-spacing:-0.050px;left:284.60px;top:741.00px;">3</div>
<div class="t" style="font-size:13.5px;color:#2b2f3a;letter-spacing:-0.203px;left:344.70px;top:741.00px;">2020-05-26 09:06:44</div>
<div class="t" style="font-size:13.5px;color:#2b2f3a;transform:scaleX(0.9572);transform-origin:0 0;left:544.50px;top:741.00px;">tCRCatalogTree</div>
<div class="t" style="font-size:13.5px;color:#2b2f3a;letter-spacing:-0.146px;left:845.10px;top:741.00px;">TC Folder creation</div>
<div class="t" style="font-size:13.5px;color:#2b2f3a;letter-spacing:0.064px;left:1144.70px;top:741.00px;">test.manager</div>
<div class="t" style="font-size:13.5px;color:#0b5a72;letter-spacing:-0.029px;left:1344.80px;top:741.00px;text-shadow:0 0 .5px #0b5a72;">Show Data</div>
<div class="row" style="top:765px;"></div>
<div class="t" style="font-size:13.5px;color:#2b2f3a;letter-spacing:-0.050px;left:284.60px;top:777.00px;">2</div>
<div class="t" style="font-size:13.5px;color:#2b2f3a;letter-spacing:-0.203px;left:344.70px;top:777.00px;">2020-05-26 09:06:44</div>
<div class="t" style="font-size:13.5px;color:#2b2f3a;letter-spacing:-0.089px;left:544.50px;top:777.00px;">user</div>
<div class="t" style="font-size:13.5px;color:#2b2f3a;letter-spacing:0.069px;left:844.10px;top:777.00px;">Login</div>
<div class="t" style="font-size:13.5px;color:#2b2f3a;left:1144.70px;top:777.00px;">test.lead</div>
<div class="t" style="font-size:13.5px;color:#0b5a72;letter-spacing:-0.029px;left:1344.80px;top:777.00px;text-shadow:0 0 .5px #0b5a72;">Show Data</div>
<div class="row" style="top:801px;"></div>
<div class="t" style="font-size:13.5px;color:#2b2f3a;letter-spacing:-0.050px;left:283.60px;top:813.00px;">1</div>
<div class="t" style="font-size:13.5px;color:#2b2f3a;letter-spacing:-0.203px;left:344.70px;top:813.00px;">2020-05-26 09:06:44</div>
<div class="t" style="font-size:13.5px;color:#2b2f3a;letter-spacing:-0.089px;left:544.50px;top:813.00px;">user</div>
<div class="t" style="font-size:13.5px;color:#2b2f3a;letter-spacing:0.069px;left:844.10px;top:813.00px;">Login</div>
<div class="t" style="font-size:13.5px;color:#2b2f3a;letter-spacing:0.064px;left:1144.70px;top:813.00px;">test.manager</div>
<div class="t" style="font-size:13.5px;color:#0b5a72;letter-spacing:-0.029px;left:1344.80px;top:813.00px;text-shadow:0 0 .5px #0b5a72;">Show Data</div>
<!-- footer -->
<div class="abs" style="left:276px;top:859px;width:1590px;height:1px;background:#dfe2e6"></div>
<div class="inp" style="left:278px;top:870px;width:60px;height:35px"></div>
<div class="t" style="font-size:14px;color:#2b2f3a;transform:scaleX(0.9565);transform-origin:0 0;left:288.60px;top:881.00px;">25</div>
<div class="abs" style="left:322px;top:885.400px;width:0;height:0;border-left:4px solid transparent;border-right:4px solid transparent;border-top:4px solid #222"></div>
<div class="t" style="font-size:13.5px;color:#555b66;letter-spacing:-0.029px;left:346.20px;top:881.00px;">Showing <span style="color:#23262e">1</span> to <span style="color:#23262e">13</span> of <span style="color:#23262e">13</span></div>
<svg class="abs" style="left:1749.500px;top:877px" width="15.500" height="15" viewBox="0 0 15.500 15" fill="none" stroke="#20252f" stroke-width="1.700"><path d="M12.800 10.800 a6 6 0 1 1 -.8 -7.600"/><path d="M15 .8 v5.200 h-5.200 z" fill="#20252f" stroke="none"/></svg>
<div class="t" style="font-size:14.5px;color:#c6c8cc;transform:scaleX(0.9403);transform-origin:0 0;left:1773.06px;top:877.00px;">Prev</div>
<div class="t" style="font-size:14.5px;color:#33373f;transform:scaleX(0.8857);transform-origin:0 0;left:1811.51px;top:877.00px;">1</div>
<div class="t" style="font-size:14.5px;color:#c6c8cc;letter-spacing:0.105px;left:1827.70px;top:877.00px;">Next</div>
</body>
</html>
